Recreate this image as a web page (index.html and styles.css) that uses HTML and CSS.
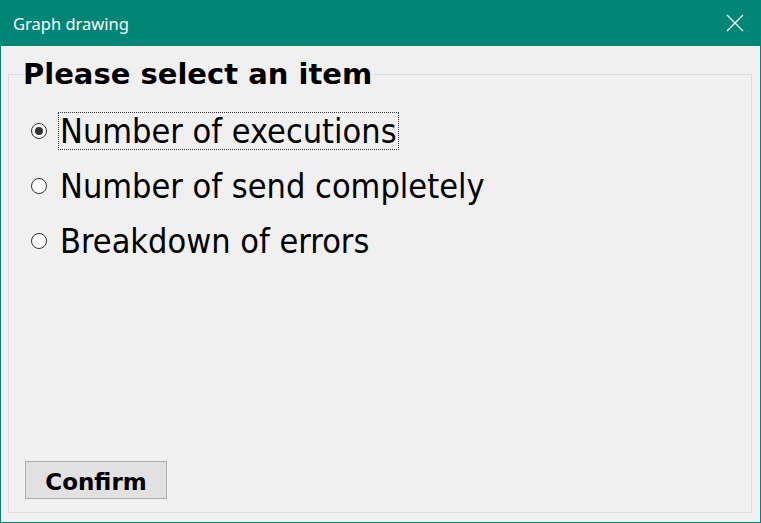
FILE: index.html
```html
<!DOCTYPE html>
<html>
<head>
<meta charset="utf-8">
<link rel="stylesheet" href="styles.css">
</head>
<body>
<div class="window">
  <div class="titlebar">
    <span class="title">Graph drawing</span>
    <span class="close">
      <svg width="18" height="18" viewBox="0 0 18 18"><path d="M1 1 L17 17 M17 1 L1 17" stroke="#fff" stroke-width="1.3" fill="none"/></svg>
    </span>
  </div>
  <div class="client">
    <fieldset class="group">
      <legend class="legend">Please select an item</legend>
      <div class="options">
        <label class="option">
          <span class="radio checked"></span>
          <span class="label focus">Number of executions</span>
        </label>
        <label class="option">
          <span class="radio"></span>
          <span class="label">Number of send completely</span>
        </label>
        <label class="option">
          <span class="radio"></span>
          <span class="label">Breakdown of errors</span>
        </label>
      </div>
      <button class="btn">Confirm</button>
    </fieldset>
  </div>
</div>
</body>
</html>
```
FILE: styles.css
```css
* { box-sizing: border-box; }
html, body { margin: 0; padding: 0; }
body { width: 761px; height: 523px; overflow: hidden; background: #f0f0f0; }
.window {
  width: 761px; height: 523px;
  border: 1px solid #018574; border-top: none;
  display: flex; flex-direction: column;
  background: #f0f0f0;
}
.titlebar {
  height: 46px; flex: none;
  background: #018574;
  display: flex; align-items: center; justify-content: space-between;
  padding: 0 0 0 13px;
  margin: 0 -1px;
}
.title { font-family: "Noto Sans", sans-serif; font-size: 16.5px; color: #fff; }
.close { width: 46px; height: 46px; display: flex; align-items: center; justify-content: center; margin-right: 3px; }
.client { flex: 1; display: flex; padding: 0 8px 9px 7px; }
.group {
  flex: 1; margin: 0; margin-top: 13px;
  border: 1px solid #dcdcdc;
  padding: 0 0 13px 16px;
  display: flex; flex-direction: column;
  min-width: 0;
}
.legend {
  font-family: "DejaVu Sans", sans-serif;
  font-weight: bold; font-size: 29px; color: #000;
  padding: 0 2px 0 0; margin-left: -2px; line-height: 30px;
}
.options { display: flex; flex-direction: column; gap: 17px; margin-top: 23px; }
.option { display: flex; align-items: center; height: 38px; }
.radio {
  width: 16px; height: 16px; border-radius: 50%;
  border: 1px solid #333; background: #fff;
  margin-left: 6px; margin-right: 11px; position: relative; flex: none;
}
.radio.checked::after {
  content: ""; position: absolute; left: 3px; top: 3px;
  width: 8px; height: 8px; border-radius: 50%; background: #333;
}
.label {
  font-family: "DejaVu Sans Condensed", "DejaVu Sans", sans-serif;
  font-size: 34px; color: #000; line-height: 36px;
  padding: 0 1px 0 1px; border: 1px dotted transparent;
}
.label.focus { border-color: #333; }
.btn {
  margin-top: auto; align-self: flex-start;
  width: 142px; height: 38px;
  background: #e1e1e1; border: 1px solid #adadad;
  font-family: "DejaVu Sans", sans-serif;
  font-weight: bold; font-size: 23px; color: #000;
  padding: 3px 0 0 0; margin-left: 0;
}
```
